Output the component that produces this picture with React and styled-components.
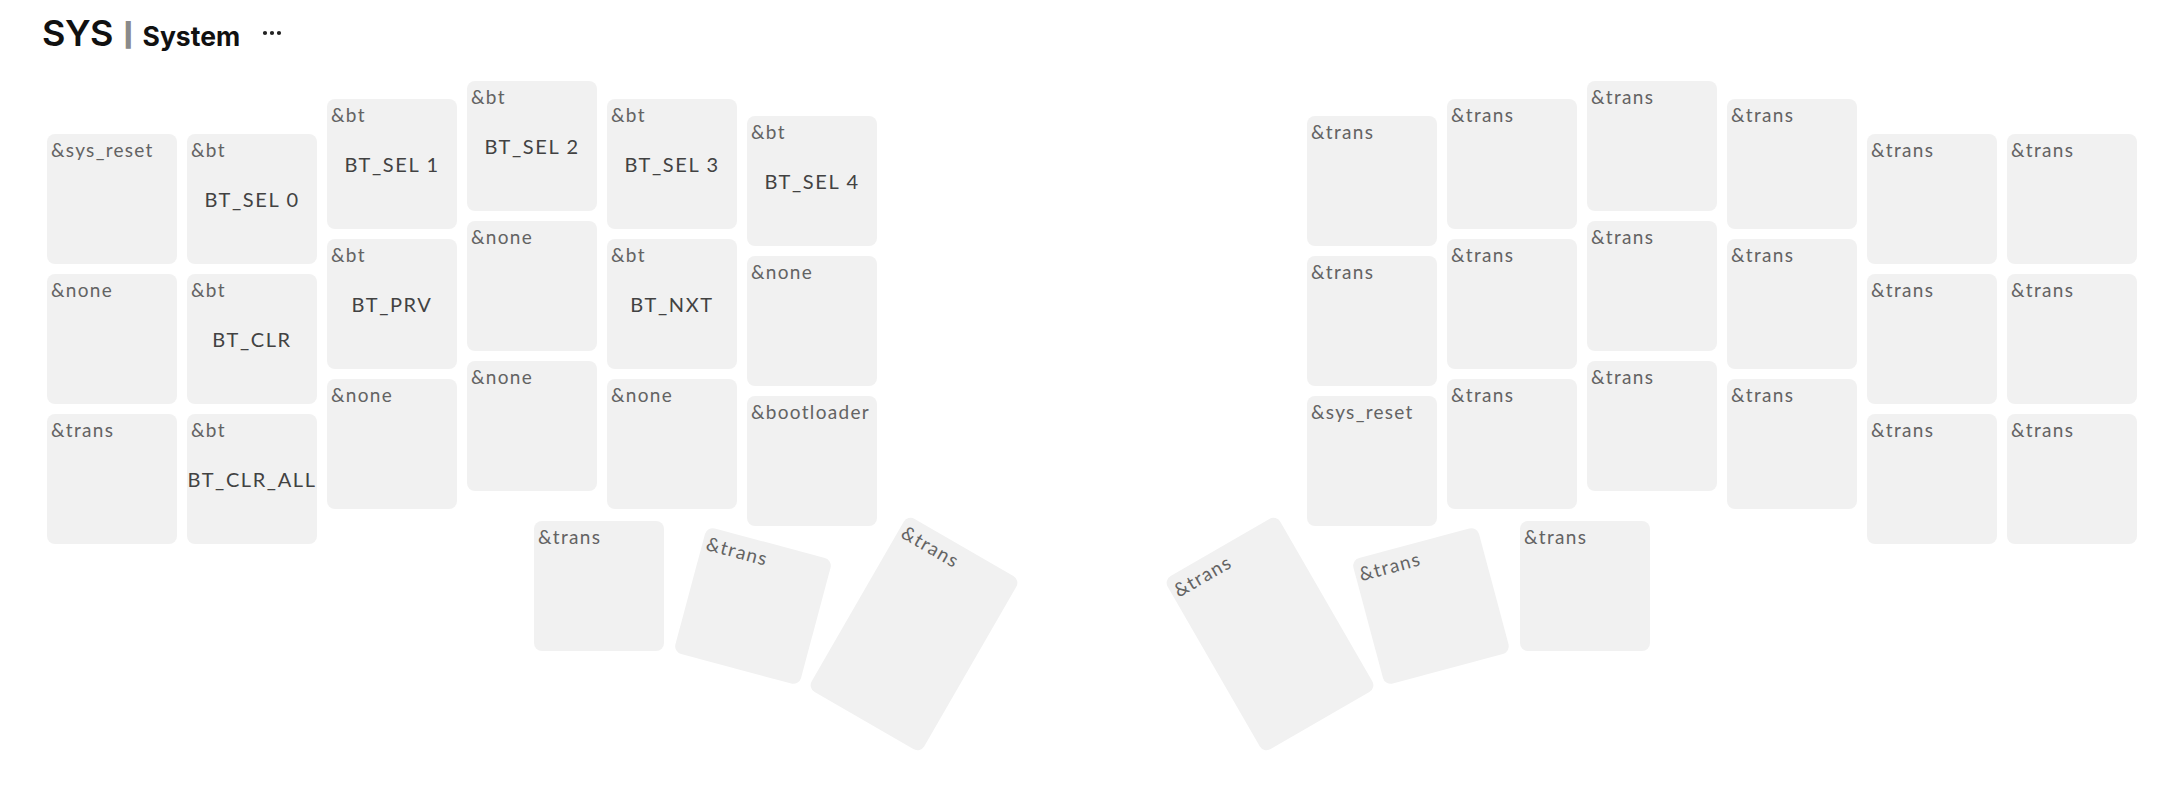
import React from "react";
import styled, { createGlobalStyle } from "styled-components";
import { Ellipsis } from "lucide-react";

const GlobalStyle = createGlobalStyle`
  html, body {
    margin: 0;
    padding: 0;
    background: #ffffff;
  }
  body {
    font-family: Lato, "Noto Sans", sans-serif;
  }
`;

const Page = styled.div`
  width: 100%;
  min-height: 100vh;
`;

const Header = styled.header`
  display: flex;
  align-items: baseline;
  height: 55px;
  box-sizing: border-box;
  padding: 11px 0 0 42px;
  font-family: Inter, "Noto Sans", sans-serif;
  line-height: 44px;
  color: #111;
`;

const LayerCode = styled.span`
  font-size: 36px;
  font-weight: 600;
  letter-spacing: -0.5px;
`;

const Divider = styled.span`
  margin: 0 10px 0 11px;
  font-size: 22px;
  font-weight: 800;
  color: #8a8a8a;
  -webkit-text-stroke: 1.4px #8a8a8a;
  transform: translateY(-3px);
`;

const LayerName = styled.span`
  font-size: 26.5px;
  font-weight: 700;
`;

const MenuButton = styled.button`
  align-self: center;
  display: flex;
  align-items: center;
  margin-left: 20px;
  padding: 0;
  border: none;
  background: none;
  color: #222;
  cursor: pointer;
`;

const Keyboard = styled.div`
  display: flex;
  justify-content: space-between;
  width: 2090px;
  margin: 26px auto 0;
`;

const Half = styled.div`
  display: flex;
  flex-direction: column;
  width: 830px;
`;

const Columns = styled.div`
  display: flex;
  align-items: flex-start;
  gap: 10px;
`;

const Column = styled.div`
  display: flex;
  flex-direction: column;
  gap: 10px;
  margin-top: ${(p) => p.$stagger}px;
`;

const ThumbRow = styled.div`
  display: flex;
  align-items: flex-start;
  justify-content: ${(p) => (p.$mirror ? "flex-end" : "flex-start")};
  margin-top: -23px;
  padding: ${(p) => (p.$mirror ? "0 487px 0 0" : "0 0 0 487px")};
`;

const Key = styled.div`
  display: grid;
  flex-shrink: 0;
  width: 130px;
  height: ${(p) => (p.$tall ? 200 : 130)}px;
  margin-top: ${(p) => p.$dy || 0}px;
  margin-left: ${(p) => p.$dx || 0}px;
  border-radius: 8px;
  background: #f1f1f1;
  transform: rotate(${(p) => p.$rotate || 0}deg);
  transform-origin: center;
`;

const Behavior = styled.span`
  grid-area: 1 / 1;
  align-self: start;
  justify-self: start;
  padding: 5px 0 0 4px;
  font-size: 19px;
  line-height: 1.2;
  letter-spacing: 1.3px;
  color: #636363;
  white-space: nowrap;
`;

const Param = styled.span`
  grid-area: 1 / 1;
  align-self: center;
  justify-self: center;
  font-size: 20px;
  line-height: 1.2;
  letter-spacing: 1.6px;
  color: #424242;
  white-space: nowrap;
`;

const leftColumns = [
  { stagger: 53, keys: [["&sys_reset"], ["&none"], ["&trans"]] },
  { stagger: 53, keys: [["&bt", "BT_SEL 0"], ["&bt", "BT_CLR"], ["&bt", "BT_CLR_ALL"]] },
  { stagger: 18, keys: [["&bt", "BT_SEL 1"], ["&bt", "BT_PRV"], ["&none"]] },
  { stagger: 0, keys: [["&bt", "BT_SEL 2"], ["&none"], ["&none"]] },
  { stagger: 18, keys: [["&bt", "BT_SEL 3"], ["&bt", "BT_NXT"], ["&none"]] },
  { stagger: 35, keys: [["&bt", "BT_SEL 4"], ["&none"], ["&bootloader"]] },
];

const rightColumns = [
  { stagger: 35, keys: [["&trans"], ["&trans"], ["&sys_reset"]] },
  { stagger: 18, keys: [["&trans"], ["&trans"], ["&trans"]] },
  { stagger: 0, keys: [["&trans"], ["&trans"], ["&trans"]] },
  { stagger: 18, keys: [["&trans"], ["&trans"], ["&trans"]] },
  { stagger: 53, keys: [["&trans"], ["&trans"], ["&trans"]] },
  { stagger: 53, keys: [["&trans"], ["&trans"], ["&trans"]] },
];

// thumb cluster, left to right
const leftThumbs = [
  { label: "&trans" },
  { label: "&trans", dx: 24, dy: 20, rotate: 15 },
  { label: "&trans", dx: 31, dy: 13, rotate: 30, tall: true },
];

const rightThumbs = [
  { label: "&trans", dy: 13, rotate: -30, tall: true },
  { label: "&trans", dx: 31, dy: 20, rotate: -15 },
  { label: "&trans", dx: 24 },
];

const KeyCap = ({ behavior, param, ...rest }) => (
  <Key {...rest}>
    <Behavior>{behavior}</Behavior>
    {param && <Param>{param}</Param>}
  </Key>
);

const KeyboardHalf = ({ columns, thumbs, mirror }) => (
  <Half>
    <Columns>
      {columns.map((col, i) => (
        <Column key={i} $stagger={col.stagger}>
          {col.keys.map(([behavior, param], j) => (
            <KeyCap key={j} behavior={behavior} param={param} />
          ))}
        </Column>
      ))}
    </Columns>
    <ThumbRow $mirror={mirror}>
      {thumbs.map((t, i) => (
        <KeyCap
          key={i}
          behavior={t.label}
          $dx={t.dx}
          $dy={t.dy}
          $rotate={t.rotate}
          $tall={t.tall}
        />
      ))}
    </ThumbRow>
  </Half>
);

export default function App() {
  return (
    <Page>
      <GlobalStyle />
      <Header>
        <LayerCode>SYS</LayerCode>
        <Divider>|</Divider>
        <LayerName>System</LayerName>
        <MenuButton aria-label="Layer menu">
          <Ellipsis size={24} strokeWidth={2.2} />
        </MenuButton>
      </Header>
      <Keyboard>
        <KeyboardHalf columns={leftColumns} thumbs={leftThumbs} />
        <KeyboardHalf columns={rightColumns} thumbs={rightThumbs} mirror />
      </Keyboard>
    </Page>
  );
}
